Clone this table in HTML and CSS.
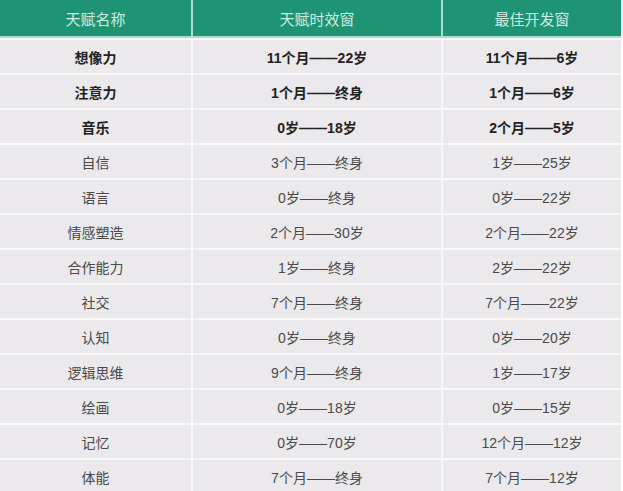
FILE: index.html
```html
<!DOCTYPE html>
<html lang="zh">
<head>
<meta charset="utf-8">
<link rel="stylesheet" href="styles.css">
</head>
<body>
<div class="table">
  <div class="row head"><div class="cell">天赋名称</div><div class="cell">天赋时效窗</div><div class="cell">最佳开发窗</div></div>
  <div class="row bold"><div class="cell">想像力</div><div class="cell">11个月——22岁</div><div class="cell">11个月——6岁</div></div>
  <div class="row bold"><div class="cell">注意力</div><div class="cell">1个月——终身</div><div class="cell">1个月——6岁</div></div>
  <div class="row bold"><div class="cell">音乐</div><div class="cell">0岁——18岁</div><div class="cell">2个月——5岁</div></div>
  <div class="row"><div class="cell">自信</div><div class="cell">3个月——终身</div><div class="cell">1岁——25岁</div></div>
  <div class="row"><div class="cell">语言</div><div class="cell">0岁——终身</div><div class="cell">0岁——22岁</div></div>
  <div class="row"><div class="cell">情感塑造</div><div class="cell">2个月——30岁</div><div class="cell">2个月——22岁</div></div>
  <div class="row"><div class="cell">合作能力</div><div class="cell">1岁——终身</div><div class="cell">2岁——22岁</div></div>
  <div class="row"><div class="cell">社交</div><div class="cell">7个月——终身</div><div class="cell">7个月——22岁</div></div>
  <div class="row"><div class="cell">认知</div><div class="cell">0岁——终身</div><div class="cell">0岁——20岁</div></div>
  <div class="row"><div class="cell">逻辑思维</div><div class="cell">9个月——终身</div><div class="cell">1岁——17岁</div></div>
  <div class="row"><div class="cell">绘画</div><div class="cell">0岁——18岁</div><div class="cell">0岁——15岁</div></div>
  <div class="row"><div class="cell">记忆</div><div class="cell">0岁——70岁</div><div class="cell">12个月——12岁</div></div>
  <div class="row"><div class="cell">体能</div><div class="cell">7个月——终身</div><div class="cell">7个月——12岁</div></div>
</div>
</body>
</html>
```
FILE: styles.css
```css
html, body {
  margin: 0;
  padding: 0;
  background: #ffffff;
}
body {
  font-family: "Liberation Sans", "Noto Sans CJK SC", sans-serif;
  width: 623px;
  height: 491px;
  overflow: hidden;
}
.table {
  width: 621px;
  display: flex;
  flex-direction: column;
  gap: 2px;
  background: #f8f8fa;
}
.row {
  display: grid;
  grid-template-columns: 191px 248px 178px;
  column-gap: 2px;
  height: 33px;
  background: #f8f8fa;
}
.cell {
  background: #ebe9ec;
  color: #4a4a4a;
  font-size: 14px;
  display: flex;
  align-items: center;
  justify-content: center;
}
.bold .cell {
  font-weight: bold;
  color: #222222;
}
.head {
  height: 38px;
  background: #a6ddcc;
}
.head .cell {
  background: #1f9474;
  color: #cdeee2;
  font-size: 15px;
  height: 36px;
  border-bottom: 2px solid #a6ddcc;
  box-sizing: content-box;
}
```
